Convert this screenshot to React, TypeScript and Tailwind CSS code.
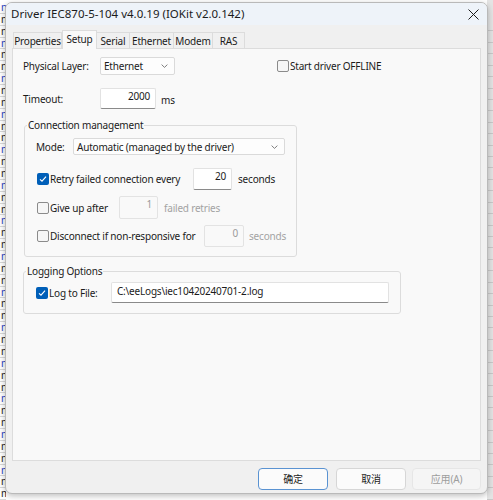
import type { ReactElement, ReactNode } from 'react';

const FONT = "font-['Noto_Sans','Noto_Sans_CJK_SC',sans-serif]";

const TABS: Array<{ label: string; width: string; active?: boolean }> = [
  { label: 'Properties', width: 'w-[49px]' },
  { label: 'Setup', width: 'w-[35px]', active: true },
  { label: 'Serial', width: 'w-[34px]' },
  { label: 'Ethernet', width: 'w-[45px]' },
  { label: 'Modem', width: 'w-[40px]' },
  { label: 'RAS', width: 'w-[33px]' },
];

function CheckBox({ checked = false }: { checked?: boolean }): ReactElement {
  if (checked) {
    return (
      <span className="flex h-[12px] w-[12px] shrink-0 items-center justify-center rounded-[2px] bg-[#005fb8]">
        <svg width="8" height="8" viewBox="0 0 8 8">
          <path d="M1 4.3 L3 6.2 L7 1.6" fill="none" stroke="#fff" strokeWidth="1.1" />
        </svg>
      </span>
    );
  }
  return <span className="h-[12px] w-[12px] shrink-0 rounded-[2px] border border-[#8b8b8b] bg-[#f6f6f6]" />;
}

function TextBox({
  value,
  className,
  disabled = false,
  left = false,
}: {
  value: string;
  className: string;
  disabled?: boolean;
  left?: boolean;
}): ReactElement {
  return (
    <div
      className={`${className} flex shrink-0 items-start rounded-[2px] border ${
        left ? 'justify-start pl-[5px] pt-[1px]' : 'justify-end pr-[5px]'
      } ${
        disabled
          ? 'border-[#e3e3e3] bg-[#f9f9f9] text-[#9b9b9b]'
          : 'border-[#e2e2e2] border-b-[#8a8a8a] bg-white text-[#1b1b1b]'
      }`}
    >
      {value}
    </div>
  );
}

function Select({ value, className }: { value: string; className: string }): ReactElement {
  return (
    <div
      className={`${className} flex shrink-0 items-center justify-between rounded-[2px] border border-[#dadada] bg-[#fdfdfd] pl-[3px] pr-[6px]`}
    >
      <span>{value}</span>
      <svg width="7" height="4" viewBox="0 0 7 4">
        <path d="M0.6 0.6 L3.5 3.4 L6.4 0.6" fill="none" stroke="#707070" strokeWidth="0.9" />
      </svg>
    </div>
  );
}

function Group({
  title,
  className,
  children,
}: {
  title: string;
  className: string;
  children: ReactNode;
}): ReactElement {
  return (
    <fieldset className={`${className} rounded-[3px] border border-[#dcdcdc] p-0`}>
      <legend className="ml-[2px] px-[1px] leading-[16px]">{title}</legend>
      {children}
    </fieldset>
  );
}

function Button({ label, variant }: { label: string; variant: 'default' | 'normal' | 'disabled' }): ReactElement {
  const styles = {
    default: 'border-[#5a93d2] bg-[#fbfbfb] text-[#1b1b1b]',
    normal: 'border-[#d6d6d6] bg-[#fbfbfb] text-[#1b1b1b]',
    disabled: 'border-[#e6e6e6] bg-[#f5f5f5] text-[#9d9d9d]',
  }[variant];
  return (
    <div className={`flex h-[22px] items-center justify-center rounded-[4px] border ${styles}`}>{label}</div>
  );
}

// the window behind the dialog: only thin slivers of its list show
function BackgroundApp(): ReactElement {
  const rows = Array.from({ length: 42 }, (_, i) => i);
  return (
    <div className="flex h-full w-full">
      <div className="flex w-[6px] flex-col overflow-hidden bg-white pt-[2px]">
        {rows.map((i) => (
          <div
            key={i}
            className={`h-[12px] overflow-hidden border-b border-[#d8d8d8] pl-[1px] text-[10px] leading-[11px] ${
              i % 3 === 0 ? 'text-[#1f3fbf]' : 'text-[#222]'
            }`}
          >
            m
          </div>
        ))}
      </div>
      <div className="flex-1 bg-white" />
      <div className="flex w-[6px] flex-col bg-[#e4e4e4] pt-[20px]">
        {rows.map((i) => (
          <div key={i} className="h-[13px] border-b border-[#c9c9c9]" />
        ))}
      </div>
    </div>
  );
}

export default function App(): ReactElement {
  return (
    <div className={`relative h-[500px] w-[493px] overflow-hidden bg-[#d6d6d6] text-[#1b1b1b] ${FONT}`}>
      <BackgroundApp />

      <div className="absolute left-[5px] top-[2px] flex h-[492px] w-[483px] flex-col overflow-hidden rounded-[7px] border border-[#b9b9b9] bg-[#f0f0f0] text-[10px] leading-[14px] tracking-[-0.2px] shadow-[0_2px_6px_rgba(0,0,0,0.25)]">
        {/* title bar */}
        <div className="flex h-[22px] shrink-0 items-center justify-between bg-[#eef3f9] pl-[5px] pr-[8px] text-[11.5px] tracking-normal">
          <span>Driver IEC870-5-104 v4.0.19 (IOKit v2.0.142)</span>
          <svg width="11" height="11" viewBox="0 0 11 11">
            <path d="M0.5 0.5 L10.5 10.5 M10.5 0.5 L0.5 10.5" stroke="#1b1b1b" strokeWidth="1" />
          </svg>
        </div>

        {/* tabs */}
        <div className="relative z-10 ml-[7px] mt-[5px] flex h-[18px] items-end">
          {TABS.map((tab) => (
            <div
              key={tab.label}
              className={`${tab.width} flex items-center justify-center border border-[#dcdcdc] ${
                tab.active
                  ? '-mb-px h-[19px] border-b-0 bg-[#f9f9f9] pb-[2px]'
                  : 'h-[16px] -ml-px border-b-0 bg-[#f0f0f0] first:ml-0'
              }`}
            >
              {tab.label}
            </div>
          ))}
        </div>

        {/* tab panel */}
        <div className="mx-[6px] h-[413px] shrink-0 border border-[#dcdcdc] bg-[#f9f9f9] pl-[10px] pt-[8px]">
          <div className="flex h-[18px] items-center">
            <span className="w-[77px]">Physical Layer:</span>
            <Select value="Ethernet" className="h-[18px] w-[75px]" />
            <span className="ml-[102px] flex items-center gap-[1px]">
              <CheckBox />
              <span>Start driver OFFLINE</span>
            </span>
          </div>

          <div className="mt-[13px] flex h-[21px] items-center">
            <span className="w-[77px]">Timeout:</span>
            <TextBox value="2000" className="h-[21px] w-[56px]" />
            <span className="ml-[5px] mt-[3px]">ms</span>
          </div>

          <Group title="Connection management" className="ml-px mt-[8px] w-[273px]">
            <div className="pb-[9px] pl-[11px] pt-[5px]">
              <div className="flex h-[17px] items-center">
                <span className="w-[37px]">Mode:</span>
                <Select value="Automatic (managed by the driver)" className="h-[17px] w-[212px]" />
              </div>

              <div className="mt-[13px] flex h-[22px] items-center">
                <span className="ml-px flex w-[156px] items-center gap-[1px]">
                  <CheckBox checked />
                  <span>Retry failed connection every</span>
                </span>
                <TextBox value="20" className="h-[22px] w-[39px]" />
                <span className="ml-[6px]">seconds</span>
              </div>

              <div className="mt-[6px] flex h-[23px] items-center">
                <span className="ml-px flex w-[82px] items-center gap-[1px]">
                  <CheckBox />
                  <span>Give up after</span>
                </span>
                <TextBox value="1" disabled className="h-[23px] w-[39px]" />
                <span className="ml-[6px] text-[#a3a3a3]">failed retries</span>
              </div>

              <div className="mt-[6px] flex h-[22px] items-center">
                <span className="ml-px flex w-[167px] items-center gap-[1px]">
                  <CheckBox />
                  <span>Disconnect if non-responsive for</span>
                </span>
                <TextBox value="0" disabled className="h-[22px] w-[40px]" />
                <span className="ml-[5px] text-[#a3a3a3]">seconds</span>
              </div>
            </div>
          </Group>

          <Group title="Logging Options" className="mt-[6px] w-[378px]">
            <div className="flex h-[34px] items-start pl-[12px] pt-[3px]">
              <span className="flex h-[21px] w-[75px] items-center gap-[1px]">
                <CheckBox checked />
                <span>Log to File:</span>
              </span>
              <TextBox value="C:\eeLogs\iec10420240701-2.log" left className="h-[21px] w-[278px]" />
            </div>
          </Group>
        </div>

        {/* buttons */}
        <div className="mr-[6px] mt-[7px] flex justify-end gap-[8px]">
          <div className="w-[70px]">
            <Button label="确定" variant="default" />
          </div>
          <div className="w-[70px]">
            <Button label="取消" variant="normal" />
          </div>
          <div className="-ml-[2px] w-[69px]">
            <Button label="应用(A)" variant="disabled" />
          </div>
        </div>
      </div>
    </div>
  );
}
